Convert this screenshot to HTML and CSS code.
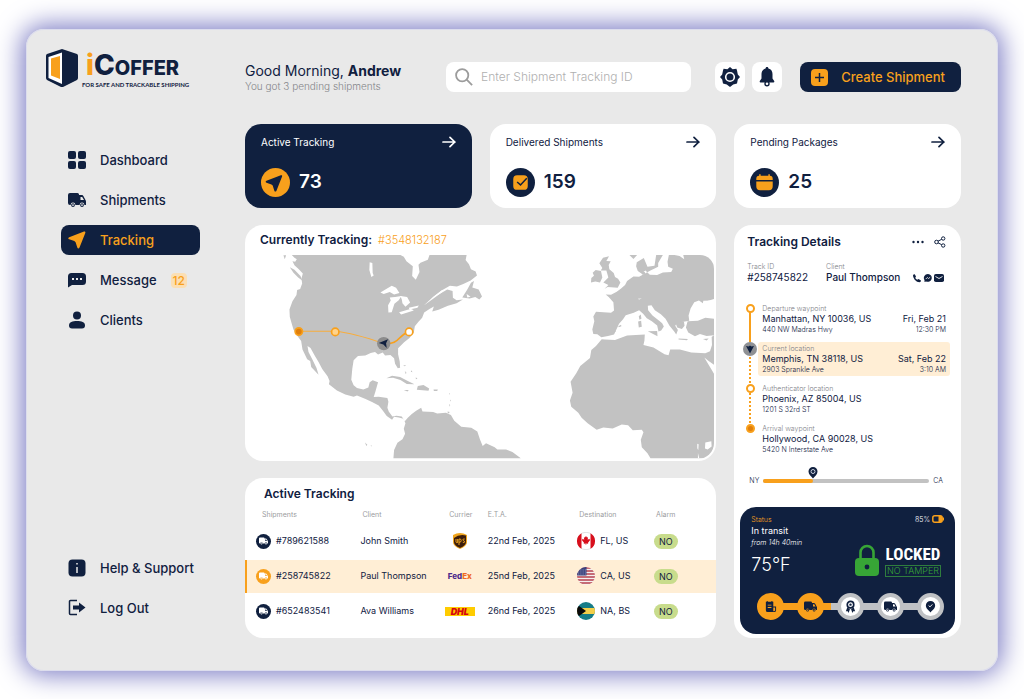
FILE: index.html
```html
<!DOCTYPE html>
<html lang="en">
<head>
<meta charset="utf-8">
<meta name="viewport" content="width=device-width, initial-scale=1">
<title>iCoffer – Tracking</title>
<link rel="stylesheet" href="styles.css">
</head>
<body>
<svg class="sprite" aria-hidden="true">
  <symbol id="truck" viewBox="0 0 18 16"><path d="M2 1h7.500a1.500 1.500 0 0 1 1.500 1.500V3h2.500c1 0 1.600.5 2 1.200L17.500 8c.3.500.5 1 .5 1.500V13h-1.600a2.400 2.400 0 0 0-4.800 0H7.400a2.400 2.400 0 0 0-4.800 0H2a2 2 0 0 1-2-2V3a2 2 0 0 1 2-2zm10.500 4v3H16l-1.800-3z" fill-rule="evenodd"/><path d="M5 11.200a1.900 1.900 0 1 0 0 3.800 1.900 1.900 0 0 0 0-3.800zm0 1a.9.9 0 1 1 0 1.800.9.900 0 0 1 0-1.800zM14 11.200a1.900 1.900 0 1 0 0 3.800 1.900 1.900 0 0 0 0-3.800zm0 1a.9.9 0 1 1 0 1.800.9.900 0 0 1 0-1.800z" fill-rule="evenodd"/></symbol>
  <symbol id="plane" viewBox="0 0 18 18"><path d="M1.200 6.200 16 .6c1-.3 1.700.3 1.300 1.300L11.500 16.500c-.5 1.200-1.800 1.200-2.200 0L7.600 11.200 6.300 10 1.200 8.300C0 7.800 0 6.700 1.200 6.200z"/></symbol>
  <symbol id="arrow" viewBox="0 0 14 12"><path d="M1 6h12M8 1.300 12.800 6 8 10.700" fill="none" stroke="currentColor" stroke-width="1.700" stroke-linecap="round" stroke-linejoin="round"/></symbol>
</svg>

<div class="panel">
  <aside class="sidebar">
    <a class="logo" href="#">
      <svg class="logo-mark" viewBox="0 0 32 38" aria-hidden="true"><path d="M16 0 31 5Q32 5.500 32 7V29Q32 30 31 31L18 37.500Q16 38.500 14 37.500L1 31Q0 30 0 29V7Q0 5.500 1 5z" fill="#10203f"/><path d="M2.500 8 16 3.500V35L2.500 29z" fill="#fff"/><path d="M5 9.500 14 7V30L5 26.500z" fill="#f8a01c"/></svg>
      <span class="logo-text">
        <span class="logo-name"><span class="logo-i">i</span><span class="logo-c">C</span>OFFER</span>
        <span class="logo-tag">FOR SAFE AND TRACKABLE SHIPPING</span>
      </span>
    </a>
    <nav class="nav" aria-label="Main">
      <a href="#"><svg viewBox="0 0 18 18"><rect width="8" height="8" rx="2"/><rect x="10" width="8" height="8" rx="2"/><rect y="10" width="8" height="8" rx="2"/><rect x="10" y="10" width="8" height="8" rx="2"/></svg>Dashboard</a>
      <a href="#"><svg viewBox="0 0 18 16"><use href="#truck"/></svg>Shipments</a>
      <a href="#" class="active" aria-current="page"><svg viewBox="0 0 18 18"><use href="#plane"/></svg>Tracking</a>
      <a href="#"><svg viewBox="0 0 18 16"><path fill-rule="evenodd" d="M3.500 1h11Q18 1 18 4.500v5Q18 13 14.500 13H4L0 15.500V4.500Q0 1 3.500 1zM4 6v2h2V6zm4 0v2h2V6zm4 0v2h2V6z"/></svg>Message<span class="count">12</span></a>
      <a href="#"><svg viewBox="0 0 18 18"><circle cx="9" cy="4.500" r="4"/><path d="M1 14.500C1 11 4.500 10 9 10s8 1 8 4.500Q17 17.500 14 17.500H4Q1 17.500 1 14.500z"/></svg>Clients</a>
    </nav>
    <nav class="nav nav-foot" aria-label="Account">
      <a href="#"><svg viewBox="0 0 18 18"><rect x=".5" y=".5" width="17" height="17" rx="4"/><path d="M9 8v6M9 4v1.500" stroke="#e9e9e9" stroke-width="1.500"/></svg>Help &amp; Support</a>
      <a href="#"><svg viewBox="0 0 18 18"><path d="M9 1.500H2.500a1 1 0 0 0-1 1v12a1 1 0 0 0 1 1H9" fill="none" stroke="currentColor" stroke-width="1.500"/><path d="M5 6.500h6V3.500l6.500 5-6.500 5v-3H5z"/></svg>Log Out</a>
    </nav>
  </aside>

  <main class="main">
    <header class="topbar">
      <div class="greeting">
        <h1>Good Morning, <b>Andrew</b></h1>
        <p>You got 3 pending shipments</p>
      </div>
      <label class="search">
        <svg viewBox="0 0 20 20" aria-hidden="true"><circle cx="8" cy="8" r="6.800"/><path d="m13 13 6 6"/></svg>
        <input type="search" aria-label="Shipment tracking ID" placeholder="Enter Shipment Tracking ID">
      </label>
      <div class="tools">
        <button class="tool" type="button" aria-label="Settings"><svg viewBox="0 0 20 20"><path d="M10 0 12.600 2.200 16.400 1.800 17 3.600 17.800 7.400 20 10 17.800 12.600 17 16.400 13.200 17.400 10 20 6.800 17.400 3 16.400 2.200 12.600 0 10 2.200 7.400 3 3.600 3.600 1.800 7.400 2.200z"/><circle cx="10" cy="10" r="4.300" fill="none" stroke="#fff" stroke-width="1.600"/></svg></button>
        <button class="tool" type="button" aria-label="Notifications"><svg viewBox="0 0 20 20"><path d="M10 0c1 0 1.400.7 1.400 1.500C14.300 2.300 15.500 4.500 15.500 7v4.500l1.700 2.500c.4.800 0 1.500-.8 1.500H3.600c-.8 0-1.200-.7-.8-1.500l1.700-2.500V7c0-2.500 1.200-4.700 4.100-5.500C8.600.7 9 0 10 0z"/><circle cx="10" cy="16.800" r="2" fill="#fff" stroke="currentColor" stroke-width="1.400"/></svg></button>
      </div>
      <button class="create" type="button"><svg viewBox="0 0 17 17"><rect width="17" height="17" rx="4" fill="#f8a01c"/><path d="M8.500 4v9M4 8.500h9" stroke="#10203f" stroke-width="1.500"/></svg>Create Shipment</button>
    </header>

    <a class="stat dark" href="#">
      <span class="stat-head">Active Tracking<svg viewBox="0 0 14 12"><use href="#arrow"/></svg></span>
      <span class="stat-body"><svg viewBox="0 0 30 30"><circle cx="15" cy="15" r="15" fill="#f8a01c"/><path transform="translate(4.500 7)" fill="#10203f" d="M1.200 6.200 16 .6c1-.3 1.700.3 1.300 1.300L11.500 16.500c-.5 1.200-1.800 1.200-2.200 0L7.600 11.200 6.300 10 1.200 8.300C0 7.800 0 6.700 1.200 6.200z"/></svg>73</span>
    </a>
    <a class="stat" href="#">
      <span class="stat-head">Delivered Shipments<svg viewBox="0 0 14 12"><use href="#arrow"/></svg></span>
      <span class="stat-body"><svg viewBox="0 0 30 30"><circle cx="15" cy="15" r="15" fill="#10203f"/><rect x="7.500" y="7.500" width="15" height="15" rx="4" fill="#f8a01c"/><path d="m11.500 14.500 3.500 3 6.500-7" fill="none" stroke="#10203f" stroke-width="1.500"/></svg>159</span>
    </a>
    <a class="stat" href="#">
      <span class="stat-head">Pending Packages<svg viewBox="0 0 14 12"><use href="#arrow"/></svg></span>
      <span class="stat-body"><svg viewBox="0 0 30 30"><circle cx="15" cy="15" r="15" fill="#10203f"/><path d="M6.500 12.500V11q0-3 3-3V6.500h1.500V8h8V6.500h1.500V8q3 0 3 3v1.500zM6.500 14h17v5q0 4-4 4h-9q-4 0-4-4z" fill="#f8a01c"/></svg>25</span>
    </a>

    <section class="card map-card">
      <h2>Currently Tracking: <a href="#">#3548132187</a></h2>
      <svg class="map" viewBox="21 105 1398 609" role="img" aria-label="Route map across the United States">
        <g fill="#c2c2c2">
          <path d="M155 105 163 113 170 118 165 125 157 124 163 136 176 148 188 160 184 175 186 190 180 207 171 210 169 225 157 243 148 268 149 290 154 308 160 328 172 347 183 362 187 388 201 417 210 422 213 440 235 463 229 443 217 418 205 395 202 377 211 383 223 405 235 425 246 446 262 468 268 482 266 492 290 510 315 522 340 529 350 525 374 535 395 545 415 555 427 570 439 587 455 598 461 589 475 591 489 595 495 608 490 625 494 640 486 656 471 667 461 688 459 713H840L829 705 815 694 796 687 770 687 762 680 736 668 726 676 718 657 710 633 692 622 662 619 641 601 631 584 616 577 590 579 578 575 546 573 542 562 527 571 514 581 502 592 493 602 484 588 468 586 456 588 445 573 441 562 444 544 441 533 415 529 400 530 405 514 413 486 397 480 388 486 384 501 369 507 350 503 340 495 333 478 336 445 340 420 353 407 375 406 391 398 404 395 413 403 427 397 434 406 450 404 461 414 464 430 472 444 479 442 478 424 473 402 473 384 491 366 507 353 520 337 523 318 534 305 545 293 551 277 568 266 580 259 575 274 594 269 622 257 648 249 667 238 648 240 637 233 636 213 620 208 592 225 580 230 603 211 628 197 649 199 668 192 690 181 709 166 705 154 691 148 685 133 675 120 678 105z"/>
          <path d="M665 232 680 208 691 188 700 183 695 202 714 208 724 229 716 238 704 231 687 235z"/>
          <path d="M438 474 455 466 479 470 502 482 522 492 499 491 480 479 458 472zM532 497 549 494 566 504 564 511 529 508zM490 509h15l-4 4zM579 507h13l-2 5h-10z"/>
          <path d="M149 142 163 149 181 168 187 182 174 172 160 158zM130 106h8l-4 12z"/>
          <path d="m488 435 9 0-4 3zM493 452l5 5-2 5zM513 450l3 6-5-2zM526 471l5 4-5 2zM625 518l3 2-2 3zM629 537l2 4-3 2zM626 551l3 3-2 5zM621 573l7 2-6 5zM374 666l7 7-3 3zM391 674l5 2-4 1z"/>
          <g transform="translate(720 0)">
            <path d="M606 105 609 118 595 108 580 105H563L559 125 561 140 575 146 570 156 545 157 528 165 506 164 493 151 481 160 470 153 465 139 467 127 488 114 499 140 520 137 525 105H545L531 129 531 140 508 151 474 170 457 169 438 183 432 195 420 205 407 215 390 224 374 223 383 231 397 246 399 271 390 278 345 275 337 289 340 303 334 328 337 341 349 342 361 351 381 347 399 343 405 330 414 311 426 297 434 285 458 278 474 270 486 281 497 294 512 303 528 316 532 334 540 331 548 319 543 309 534 302 514 286 501 270 500 257 511 255 521 270 539 282 553 296 565 317 579 334 585 343 590 329 582 317 588 308 607 305 624 302 622 286 628 265 639 246 653 241 666 250 673 244 699 236V115Q689 105 665 105z"/>
            <path d="M619 303 650 302 672 293 699 296V345L676 347 656 341 641 348 621 337 614 322z"/>
            <path d="M371 358 402 359 438 346 491 343 490 361 487 374 517 382 550 402 562 405 567 388 596 388 630 397 672 399 686 393 692 374 691 350 699 344V713H508L499 698 482 680 479 658 487 635 482 628 455 629 441 614 422 612 395 624 367 621 347 628 320 608 302 592 292 577 271 559 267 540 275 517 269 484 286 459 298 437 327 413 331 389 345 377 362 357z"/>
            <path d="M330 187 343 184 357 187 364 172 360 153 344 150 335 158 339 167 331 174zM362 211 380 201 410 203 418 187 411 176 402 171 398 159 385 148 383 135 389 124 376 123 384 109 366 113 355 130 364 144 359 151 376 151 382 172 367 187 382 195 370 207zM473 288l6-5 2 13-6 3zM471 304l9-2 2 18-9 2zM500 333 528 332 529 348zM592 355l28 1-3 4-25-2zM665 356l17-1-6 6zM582 306l26-2 2 13-8 9-14-4zM479 156h12l2 9-10-2zM445 105h23l-11 12zM412 318l8-4 1 4-8 3zM400 334l3-3 1 4z"/>
          </g>
        </g>
        <g fill="#fff">
          <path d="M480 105H567L562 119 540 128 534 134 537 156 526 179 515 168 517 139 498 124 490 110z"/>
          <path d="M420 217 435 208 454 197 467 203 477 219 461 223 448 216 430 222zM448 232 464 231 483 228 475 240 462 251 454 276 444 277 443 255 451 241zM480 228 500 231 509 247 495 260 486 249 484 238zM476 276 512 266 520 271 482 283zM505 263 535 256 531 263 507 268zM388 127 396 129 397 159 400 166 393 171 387 150zM578 230 605 210 610 212 582 233 550 256z"/>
          <path d="M1389 412 1402 422 1419 434V462L1406 440zM1392 666l18-4 1 16-12 9-8-3zM1368 670l4 1-1 18-3-6zM1370 697l4 16h-4zM1190 236l12-1-8 3zM1386 242l30-1-3 14-15-2 20 7-35 2zM678 222l12 8-10 2z"/>
        </g>
        <path d="M176 333H285Q340 338 430 370" fill="none" stroke="#f8ad3d" stroke-width="3"/>
        <path d="M430 370C480 374 470 345 506 335" fill="none" stroke="#f8a01c" stroke-width="5"/>
        <circle cx="176" cy="334" r="11" fill="#e07f0c" stroke="#f8a01c" stroke-width="5"/>
        <circle cx="285" cy="335" r="11" fill="#ffd38a" stroke="#f8a01c" stroke-width="5"/>
        <circle cx="506" cy="335" r="11" fill="#fff" stroke="#f8a01c" stroke-width="5"/>
        <circle cx="430" cy="370" r="20" fill="#8c8c8c"/>
        <path d="m415 368 28-11-6 12 2 14-10-10z" fill="#10203f"/>
      </svg>
    </section>

    <section class="card table-card">
      <h2>Active Tracking</h2>
      <table>
        <thead><tr><th>Shipments</th><th>Client</th><th>Currier</th><th>E.T.A.</th><th>Destination</th><th>Alarm</th></tr></thead>
        <tbody>
          <tr>
            <td><span class="cell"><span class="dot"><svg viewBox="0 0 18 16"><use href="#truck"/></svg></span>#789621588</span></td><td>John Smith</td>
            <td><svg class="ups" viewBox="0 0 14 16" role="img" aria-label="UPS"><path d="M0 2Q7-2 14 2v7q0 4-7 7Q0 13 0 9z" fill="#f0a51d"/><path d="M1 5Q6 1 13 2.500V9q0 3.500-6 6Q1 12.500 1 9z" fill="#3c1d0c"/><path d="M3 6v3q0 1 1.700.5V6M6 12V6q2.200-.5 2.200 1.500T6 9.300M11.700 6q-1.800-.4-1.800.8 0 .8 1 1.100 1 .4.700 1.200-.5.700-1.800.2" fill="none" stroke="#f0a51d"/></svg></td>
            <td>22nd Feb, 2025</td>
            <td><span class="cell"><svg class="flag" viewBox="0 0 18 18" aria-hidden="true"><circle cx="9" cy="9" r="8.700" fill="#fff" stroke="#ccc" stroke-width=".6"/><path d="M4.500 1.200v15.600A9 9 0 0 1 4.500 1.200zM13.500 1.200v15.600A9 9 0 0 0 13.500 1.200z" fill="#d80f1c"/><path d="m9 4 1 1.600 1-.4-.3 2.500 1.800-1 .5 1.600-2 2.400.2 1-2-.3V13h-.5v-1.600l-2 .3.300-1-2-2.400.5-1.600 1.700 1L6.900 5.200l1 .4z" fill="#d80f1c"/></svg>FL, US</span></td>
            <td><span class="pill">NO</span></td>
          </tr>
          <tr class="selected">
            <td><span class="cell"><span class="dot"><svg viewBox="0 0 18 16"><use href="#truck"/></svg></span>#258745822</span></td><td>Paul Thompson</td>
            <td><span class="fedex">Fed<b>Ex</b></span></td>
            <td>25nd Feb, 2025</td>
            <td><span class="cell"><svg class="flag" viewBox="0 0 18 18" aria-hidden="true"><clipPath id="round"><circle cx="9" cy="9" r="9"/></clipPath><g clip-path="url(#round)"><path d="M0 0h18v18H0z" fill="#f5f0f0"/><path d="M0 1h18M0 4h18M0 7h18M0 10h18M0 13h18M0 16h18" stroke="#b5404d" stroke-width="1.500"/><path d="M0 0h9.500v8.500H0z" fill="#39407c"/><path d="M1 3h8M1 5h8M1 7h8" stroke="#b3b5d0" stroke-width=".8" stroke-dasharray=".8 1"/></g></svg>CA, US</span></td>
            <td><span class="pill">NO</span></td>
          </tr>
          <tr>
            <td><span class="cell"><span class="dot"><svg viewBox="0 0 18 16"><use href="#truck"/></svg></span>#652483541</span></td><td>Ava Williams</td>
            <td><span class="dhl">DHL</span></td>
            <td>26nd Feb, 2025</td>
            <td><span class="cell"><svg class="flag" viewBox="0 0 18 18" aria-hidden="true"><g clip-path="url(#round)"><path d="M0 0h18v18H0z" fill="#167c87"/><path d="M0 6h18v6H0z" fill="#f3cf4a"/><path d="M0 2.500 9 9l-9 6.500z" fill="#0a0a0a"/></g></svg>NA, BS</span></td>
            <td><span class="pill">NO</span></td>
          </tr>
        </tbody>
      </table>
    </section>

    <section class="card details">
      <header class="details-head">
        <h2>Tracking Details</h2>
        <button type="button" aria-label="More"><svg viewBox="0 0 12 12"><circle cx="1.500" cy="6" r="1.200"/><circle cx="6" cy="6" r="1.200"/><circle cx="10.500" cy="6" r="1.200"/></svg></button>
        <button type="button" aria-label="Share"><svg viewBox="0 0 12 12"><g fill="none" stroke="currentColor"><circle cx="2.500" cy="6" r="1.800"/><circle cx="9.200" cy="2.500" r="1.700"/><circle cx="9.200" cy="9.500" r="1.700"/><path d="m4 5.200 3.700-1.900M4 6.800l3.700 1.900"/></g></svg></button>
      </header>
      <div class="who">
        <p><small>Track ID</small>#258745822</p>
        <p class="who-client"><small>Client</small>Paul Thompson</p>
        <div class="contact">
          <button type="button" aria-label="Call"><svg viewBox="0 0 10 10"><path d="M1 2.200Q1.500 1 2.700 1.200L4 3.500 3.200 5Q4 6.300 5.200 6.800L6.500 6 9 7.500Q9 9 7.500 9.200 5 9.200 2.700 6.700.8 4.300 1 2.200z"/></svg></button>
          <button type="button" aria-label="Chat"><svg viewBox="0 0 10 10"><path d="M5 1a4 3.900 0 1 1-2 7.400L1.500 9V7A4 3.900 0 0 1 5 1z"/><path d="m2.800 6 1.500-1.500 1.200 1 1.700-1.300" stroke="#fff" stroke-width=".8" fill="none"/></svg></button>
          <button type="button" aria-label="Mail"><svg viewBox="0 0 10 10"><rect y="1" width="10" height="8" rx="1.800"/><path d="m1.500 3.500 3.500 2 3.500-2" fill="none" stroke="#fff" stroke-width=".9"/></svg></button>
        </div>
      </div>
      <ol class="route">
        <li class="done"><i></i><div class="stop"><small>Departure waypoint</small><strong>Manhattan, NY 10036, US</strong><time>Fri, Feb 21</time><span>440 NW Madras Hwy</span><span class="hour">12:30 PM</span></div></li>
        <li class="current"><i><svg viewBox="0 0 14 14" aria-hidden="true"><circle cx="7" cy="7" r="7" fill="#8e9094"/><path d="m3 4 2.500.5L7 3.500l1.500 1L11 4 7 11.500z" fill="#10203f"/></svg></i><div class="stop"><small>Current location</small><strong>Memphis, TN 38118, US</strong><time>Sat, Feb 22</time><span>2903 Sprankle Ave</span><span class="hour">3:10 AM</span></div></li>
        <li><i></i><div class="stop"><small>Authenticator location</small><strong>Phoenix, AZ 85004, US</strong><span>1201 S 32rd ST</span></div></li>
        <li class="end"><i></i><div class="stop"><small>Arrival waypoint</small><strong>Hollywood, CA 90028, US</strong><span>5420 N Interstate Ave</span></div></li>
      </ol>
      <div class="progress">
        <span>NY</span>
        <div class="track"><div class="fill" style="width:30%"><svg viewBox="0 0 10 12" aria-hidden="true"><path d="M5 0a4.500 4.500 0 0 1 4.500 4.500C9.500 7.500 7 9 5 11.500 3 9 .5 7.500.5 4.500A4.500 4.500 0 0 1 5 0z" fill="#10203f"/><circle cx="5" cy="4.500" r="2" fill="none" stroke="#dce2ee" stroke-width=".9"/></svg></div></div>
        <span>CA</span>
      </div>
      <div class="status">
        <div class="status-top">
          <div><p class="status-label">Status</p><p class="status-state">In transit</p><p class="status-time">from 14h 40min</p></div>
          <p class="battery">85%<svg viewBox="0 0 12 8" aria-hidden="true"><rect x=".8" y=".8" width="9.400" height="6.400" rx="2" fill="none" stroke="#f8a01c" stroke-width="1.500"/><path d="M6.500 1H10v6H6.500zM11 2.500h1v3h-1z" fill="#f8a01c"/></svg></p>
        </div>
        <div class="status-mid">
          <p class="temp">75°F</p>
          <svg class="lock" viewBox="0 0 24 32" aria-hidden="true"><rect y="14" width="24" height="18" rx="4" fill="#37a536"/><path d="M5.500 15V8.500a6.500 6.500 0 0 1 13 0V15" fill="none" stroke="#37a536" stroke-width="2.600"/><circle cx="12" cy="23" r="2.400" fill="#10203f"/></svg>
          <div class="lock-text"><b>LOCKED</b><span>NO TAMPER</span></div>
        </div>
        <ol class="steps">
          <li class="on"><svg viewBox="0 0 14 14" aria-label="Order"><path fill-rule="evenodd" d="M2 2h1V1h1v1h4V1h1v1h1v5h3v4q0 2-2 2H4q-2 0-2-2zM4 5v1h4V5zm0 2.500v1h4v-1zm6 .5v4q2 0 2-1V8z"/></svg></li>
          <li class="on"><svg viewBox="0 0 18 16" aria-label="Pickup"><use href="#truck"/></svg></li>
          <li><svg viewBox="0 0 14 14" aria-label="Verified"><circle cx="7" cy="5" r="3.500" fill="none" stroke="currentColor" stroke-width="1.800"/><circle cx="7" cy="5" r="1.300"/><path d="m3.500 8-1.500 4 2 0 1 2 1.500-4.500h1L9 14l1-2h2L10.500 8 7 10z"/></svg></li>
          <li><svg viewBox="0 0 18 16" aria-label="Delivery"><use href="#truck"/></svg></li>
          <li><svg viewBox="0 0 14 14" aria-label="Arrived"><path d="M7 1a5 5 0 0 1 5 5c0 3.200-3 5-5 7.500C5 11 2 9.200 2 6a5 5 0 0 1 5-5z"/><path d="m5 6 1.500 1.400L9 4.700" fill="none" stroke="#fff"/></svg></li>
        </ol>
      </div>
    </section>
  </main>
</div>
</body>
</html>
```
FILE: styles.css
```css
:root {
  --navy: #10203f;
  --orange: #f8a01c;
  --cream: #ffeed5;
  --muted: #9b9ca0;
}

* { box-sizing: border-box; }

body {
  margin: 0;
  min-height: 100vh;
  padding: 29px 26px;
  display: flex;
  background: #fff;
  color: var(--navy);
  font-family: Inter, "Liberation Sans", sans-serif;
}

h1, h2, p, ol { margin: 0; padding: 0; }
ol { list-style: none; }
a { color: inherit; text-decoration: none; }
button { border: 0; padding: 0; background: none; color: inherit; font: inherit; cursor: pointer; }
svg { fill: currentColor; flex: none; display: block; }
small { font-size: inherit; }
.sprite { position: absolute; width: 0; height: 0; }

.panel {
  flex: 1;
  display: flex;
  padding: 0 37px 0 0;
  background: #e9e9e9;
  border-radius: 18px;
  box-shadow: inset 0 0 0 1px #dcdded, 0 0 26px 4px #7c7cc4;
}

/* Sidebar */
.sidebar { width: 219px; flex: none; display: flex; flex-direction: column; padding: 20px 0 48px; }
.logo { display: flex; gap: 4px; margin-left: 20px; height: 38px; }
.logo-mark { width: 32px; height: 38px; }
.logo-text { display: flex; flex-direction: column; padding-top: 3px; }
.logo-name { display: flex; align-items: baseline; padding-left: 4px; font-size: 20px; line-height: 26px; font-weight: 800; }
.logo-c { font-size: 28px; }
.logo-i { font-size: 28px; color: var(--orange); }
.logo-tag { font-family: Lato, sans-serif; font-size: 6px; line-height: 8px; font-weight: 700; white-space: nowrap; }

.nav { display: flex; flex-direction: column; gap: 10px; margin: 58px 45px 0 35px; }
.nav-foot { margin-top: auto; }
.nav a { display: flex; align-items: center; gap: 14px; height: 30px; padding: 0 7px; border-radius: 8px; font-size: 13px; font-weight: 500; white-space: nowrap; }
.nav svg { width: 18px; height: 18px; }
.nav .active { background: var(--navy); color: var(--orange); }
.count { padding: 0 2px; border-radius: 4px; background: #fbdfb4; color: var(--orange); font-size: 12px; line-height: 15px; }

/* Main grid */
.main {
  flex: 1;
  min-width: 0;
  display: grid;
  grid-template-columns: repeat(3, minmax(0, 1fr));
  grid-template-rows: auto auto auto 1fr;
  gap: 17px 18px;
  padding: 33px 0;
}

.topbar { grid-column: 1 / -1; display: flex; align-items: center; height: 30px; margin-bottom: 15px; }
.greeting { width: 201px; }
.greeting h1 { font-size: 14px; line-height: 18px; font-weight: 400; white-space: nowrap; }
.greeting b { font-weight: 700; }
.greeting p { font-size: 10px; line-height: 12px; font-weight: 300; color: #85868a; }
.search { flex: 1; display: flex; align-items: center; gap: 8px; height: 30px; padding: 0 9px; border-radius: 8px; background: #fff; }
.search svg { width: 18px; height: 18px; fill: none; stroke: #9c9c9c; stroke-width: 2; }
.search input { flex: 1; min-width: 0; border: 0; outline: 0; padding: 0; background: none; color: var(--navy); font: 300 12px/16px Inter, "Liberation Sans", sans-serif; }
.search input::placeholder { color: #b0b0b0; }
.tools { display: flex; gap: 7px; margin: 0 18px 0 24px; }
.tool { display: grid; place-items: center; width: 30px; height: 30px; border-radius: 8px; background: #fff; }
.tool svg { width: 20px; height: 20px; }
.create { display: flex; align-items: center; gap: 13px; height: 30px; padding: 0 16px 0 11px; border-radius: 8px; background: var(--navy); color: var(--orange); font-size: 13px; font-weight: 500; white-space: nowrap; }
.create svg { width: 17px; height: 17px; }

.stat { display: flex; flex-direction: column; justify-content: space-between; height: 84px; padding: 9px 16px 11px; border-radius: 16px; background: #fff; }
.stat.dark { background: var(--navy); color: #fff; }
.stat-head { display: flex; justify-content: space-between; align-items: center; font-size: 10px; line-height: 18px; }
.stat-head svg { width: 14px; height: 12px; }
.stat-body { display: flex; align-items: center; gap: 9px; font-size: 19px; line-height: 30px; font-weight: 600; }
.stat-body > svg { width: 29px; height: 29px; }

.card { border-radius: 18px; background: #fff; min-width: 0; }
h2 { font-size: 12px; line-height: 16px; font-weight: 600; }

.map-card { grid-column: span 2; padding: 7px 2px 2px; }
.map-card h2 { padding: 0 13px; margin-bottom: 7px; }
.map-card h2 a { margin-left: 3px; color: var(--orange); font-size: 11px; font-weight: 300; }
.map { width: 100%; border-radius: 0 14px 16px 16px; }

/* Shipments table */
.table-card { grid-column: span 2; padding: 8px 0; overflow: hidden; }
.table-card h2 { padding: 0 19px; margin-bottom: 6px; }
table { width: 100%; table-layout: fixed; border-collapse: collapse; font-size: 9px; line-height: 12px; }
th { height: 15px; padding: 0 0 0 2px; font-size: 7px; line-height: 10px; font-weight: 400; color: var(--muted); text-align: left; }
td { height: 37px; padding: 0; white-space: nowrap; }
th:first-child { width: 24.5%; padding-left: 17px; }
td:first-child { padding-left: 11px; }
th:nth-child(2) { width: 17.7%; }
th:nth-child(3) { width: 9.3%; }
th:nth-child(4) { width: 19%; padding-left: 0; }
th:nth-child(5) { width: 16.3%; }
th:nth-child(3), td:nth-child(3) { text-align: center; padding-right: 12px; }
.cell { display: flex; align-items: center; gap: 5px; }
.dot { display: grid; place-items: center; width: 15px; height: 15px; border-radius: 50%; background: var(--navy); color: #fff; }
.dot svg { width: 9px; height: 8px; }
.selected td { height: 33px; background: var(--cream); }
.selected td:first-child { box-shadow: inset 2px 0 var(--orange); }
.selected .dot { background: var(--orange); }
.ups { width: 14px; height: 16px; margin: 0 auto; }
.fedex { color: #4d2b8c; font-size: 8px; font-weight: 800; }
.fedex b { color: #f06a22; font-weight: 800; }
.dhl { display: block; margin: 0 1px; background: #fc0; color: #d40511; font-size: 9px; line-height: 9px; font-weight: 900; font-style: italic; }
.flag { width: 18px; height: 18px; }
.pill { display: inline-block; padding: 0 5px; border-radius: 8px; background: #c8dc8c; line-height: 15px; }

/* Tracking details */
.details { grid-column: 3; grid-row: 3 / span 2; display: flex; flex-direction: column; padding: 9px 6px 4px; }
.details-head { display: flex; align-items: center; gap: 10px; padding: 0 9px 0 7px; }
.details-head h2 { flex: 1; }
.details-head svg { display: block; width: 12px; height: 12px; }
.who { display: flex; align-items: flex-end; padding: 0 11px 0 7px; margin-top: 12px; font-size: 10px; line-height: 12px; white-space: nowrap; }
.who small, .stop small { display: block; font-size: 7px; line-height: 9px; font-weight: 300; color: #808288; }
.who-client { margin-left: 18px; font-weight: 500; }
.contact { display: flex; gap: 1px; margin-left: auto; }
.contact svg { width: 10px; height: 10px; }

.route { display: flex; flex-direction: column; gap: 6px; margin: 19px 5px 0 2px; }
.route li { position: relative; display: grid; grid-template-columns: 16px 1fr; }
.route i { display: block; justify-self: center; width: 9px; height: 9px; margin-top: 2px; border: 2px solid var(--orange); border-radius: 50%; background: #fff; z-index: 1; }
.route .current i { width: 14px; height: 14px; margin-top: 0; border: 0; }
.route .end i { background: #e07f0c; }
.route li:not(.end)::before { content: ""; position: absolute; left: 7px; top: 8px; height: 40px; border-left: 2px dotted var(--orange); }
.route li.done:not(.end)::before { border-left-style: solid; }
.stop { display: grid; grid-template-columns: 1fr auto; min-height: 34px; padding: 2px 4px; border-radius: 3px; font-size: 7px; line-height: 9px; white-space: nowrap; }
.current .stop { background: var(--cream); }
.stop small { grid-column: 1 / -1; }
.stop strong, .stop time { font-size: 9px; line-height: 12px; font-weight: 400; }
.stop strong, .stop span { grid-column: 1; }
.stop time, .stop .hour { grid-column: 2; text-align: right; }
.stop span, .stop .hour { font-weight: 300; }

.progress { display: flex; align-items: center; gap: 4px; margin: 20px 12px 0 9px; font-size: 7px; line-height: 9px; font-weight: 300; }
.track { flex: 1; height: 4px; border-radius: 2px; background: #c2c2c2; }
.fill { position: relative; height: 4px; border-radius: 2px; background: var(--orange); }
.fill svg { position: absolute; right: -5px; bottom: 4px; width: 10px; height: 12px; }

.status { margin-top: auto; padding: 8px 11px 14px; border-radius: 16px; background: var(--navy); color: #fff; }
.status-top { display: flex; justify-content: space-between; font-size: 7px; line-height: 9px; font-weight: 300; }
.status-label { color: var(--orange); }
.status-state { font-size: 9px; line-height: 14px; font-weight: 400; }
.status-time { font-style: italic; }
.battery { display: flex; align-items: center; gap: 2px; height: 9px; }
.battery svg { width: 12px; height: 8px; }
.status-mid { display: flex; align-items: center; margin: -4px 3px 0 0; }
.temp { flex: 1; font-size: 18px; line-height: 24px; font-weight: 300; padding-top: 10px; }
.lock { width: 24px; height: 32px; margin-right: 6px; }
.lock-text { display: flex; flex-direction: column; align-items: stretch; text-align: center; width: 56px; white-space: nowrap; }
.lock-text b { font: 700 17px/22px "Liberation Sans Narrow", "Roboto Condensed", "Open Sans Condensed", Roboto, sans-serif; }
.lock-text span { border: 1px solid #2f7d3e; color: #37a536; font-size: 9px; line-height: 10px; font-weight: 300; }
.steps { display: flex; justify-content: space-between; margin: 16px 0 0 6px; background: linear-gradient(90deg, var(--orange) 38%, #bfc1c4 38%) center / 90% 7px no-repeat; }
.steps li { display: grid; place-items: center; width: 27px; height: 27px; border: 4px solid #bfc1c4; border-radius: 50%; background: #fff; color: var(--navy); }
.steps .on { border-color: var(--orange); background: var(--orange); }
.steps svg { width: 13px; height: 13px; }
```
